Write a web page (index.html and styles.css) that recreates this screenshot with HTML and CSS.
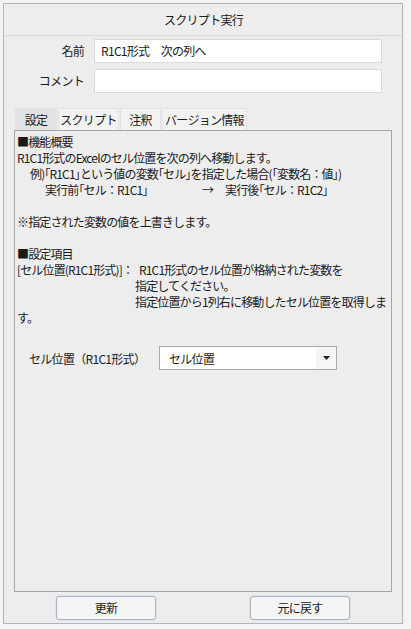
FILE: index.html
```html
<!DOCTYPE html>
<html lang="ja">
<head>
<meta charset="utf-8">
<title>スクリプト実行</title>
<link rel="stylesheet" href="styles.css">
</head>
<body>
<div class="panel">
  <div class="title">スクリプト実行</div>
  <div class="form">
    <label class="lbl">名前</label>
    <div class="input">R1C1形式　次の列へ</div>
    <label class="lbl">コメント</label>
    <div class="input"></div>
  </div>
  <div class="tabs">
    <div class="tab active t1">設定</div>
    <div class="tab t2">スクリプト</div>
    <div class="tab t3">注釈</div>
    <div class="tab t4">バージョン情報</div>
  </div>
  <div class="content">
    <div class="desc">
      <div class="line">■機能概要</div>
      <div class="line">R1C1形式のExcelのセル位置を次の列へ移動します。</div>
      <div class="line ind1">例)<span class="br">「</span>R1C1<span class="br">」</span>という値の変数<span class="br">「</span>セル<span class="br">」</span>を指定した場合(<span class="br">「</span>変数名：値<span class="br">」</span>)</div>
      <div class="line ind2"><span class="before">実行前<span class="br">「</span>セル：R1C1」</span><span class="arrow">→</span><span>実行後<span class="br">「</span>セル：R1C2」</span></div>
      <div class="line"></div>
      <div class="line">※指定された変数の値を上書きします。</div>
      <div class="line"></div>
      <div class="line">■設定項目</div>
      <div class="line"><span class="key">[セル位置(R1C1形式)]：</span>R1C1形式のセル位置が格納された変数を</div>
      <div class="line ind3">指定してください。</div>
      <div class="line ind3">指定位置から1列右に移動したセル位置を取得しま</div>
      <div class="line">す。</div>
    </div>
    <div class="field">
      <span class="flabel">セル位置（R1C1形式）</span>
      <div class="select">
        <span class="sval">セル位置</span>
        <span class="sarrow"><svg width="7" height="4" viewBox="0 0 7 4"><path d="M0 0H7L3.5 4Z" fill="#222"/></svg></span>
      </div>
    </div>
  </div>
  <div class="buttons">
    <div class="btn">更新</div>
    <div class="btn">元に戻す</div>
  </div>
</div>
</body>
</html>
```
FILE: styles.css
```css
html, body {
  margin: 0;
  padding: 0;
  background: #f4f4f4;
}
body {
  font-family: "Noto Sans CJK JP", "Noto Sans", sans-serif;
  font-size: 12px;
  color: #1a1a1a;
  padding: 3px 0 0 3px;
  letter-spacing: -0.7px;
}
.br {
  font-feature-settings: "palt";
}
.panel {
  box-sizing: border-box;
  width: 400px;
  height: 621px;
  border: 1px solid #b4b4b4;
  background: #ededed;
  display: flex;
  flex-direction: column;
}
.title {
  box-sizing: border-box;
  height: 32px;
  border-bottom: 1px solid #d8d8d8;
  border-left: 1px solid #f4f4f4;
  display: flex;
  align-items: center;
  justify-content: center;
}
.form {
  margin-top: 3px;
  display: grid;
  grid-template-columns: 80px 288px;
  column-gap: 10px;
  row-gap: 6px;
}
.lbl {
  text-align: right;
  line-height: 24px;
}
.input {
  box-sizing: border-box;
  height: 24px;
  background: #fff;
  border: 1px solid #dadada;
  padding-left: 6px;
  line-height: 22px;
}
.tabs {
  margin: 15px 0 0 11px;
  display: flex;
  height: 22px;
}
.tab {
  box-sizing: border-box;
  height: 22px;
  line-height: 21px;
  background: #f2f2f2;
  border: 1px solid #e2e2e2;
  border-bottom: none;
  text-align: center;
  margin-right: 1px;
}
.tab.active {
  background: #e2e2e2;
  border-color: #e2e2e2;
}
.t1 { width: 42px; }
.t2 { width: 61px; }
.t3 { width: 41px; }
.t4 { width: 85px; }
.content {
  flex: 1;
  margin: 0 10px;
  border: 1px solid #a6a6a6;
  padding: 3px 2px;
}
.desc {
  letter-spacing: -0.85px;
}
.line {
  height: 16px;
  line-height: 16px;
  white-space: nowrap;
}
.ind1 { padding-left: 13px; }
.ind2 { padding-left: 28px; display: flex; }
.before { width: 157px; }
.arrow { width: 23px; }
.ind3 { padding-left: 118px; }
.key { display: inline-block; width: 122px; }
.field {
  margin-top: 20px;
  display: flex;
  align-items: center;
  padding-left: 12px;
}
.flabel {
  width: 130px;
}
.select {
  box-sizing: border-box;
  width: 178px;
  height: 24px;
  border: 1px solid #a8a8a8;
  background: #fff;
  display: flex;
  align-items: center;
}
.sval {
  flex: 1;
  padding-left: 9px;
}
.sarrow {
  width: 20px;
  height: 100%;
  background: #f6f6f6;
  display: flex;
  align-items: center;
  justify-content: center;
}
.sarrow svg { display: block; }
.buttons {
  margin-top: 4px;
  padding: 0 5px 3px;
  display: grid;
  grid-template-columns: 1fr 1fr;
  justify-items: center;
}
.btn {
  box-sizing: border-box;
  width: 100px;
  height: 24px;
  border: 1px solid #a9b3c2;
  border-radius: 3px;
  background: #f4f4f4;
  box-shadow: 0 0 2px #c4d6ec;
  text-align: center;
  line-height: 22px;
}
```
